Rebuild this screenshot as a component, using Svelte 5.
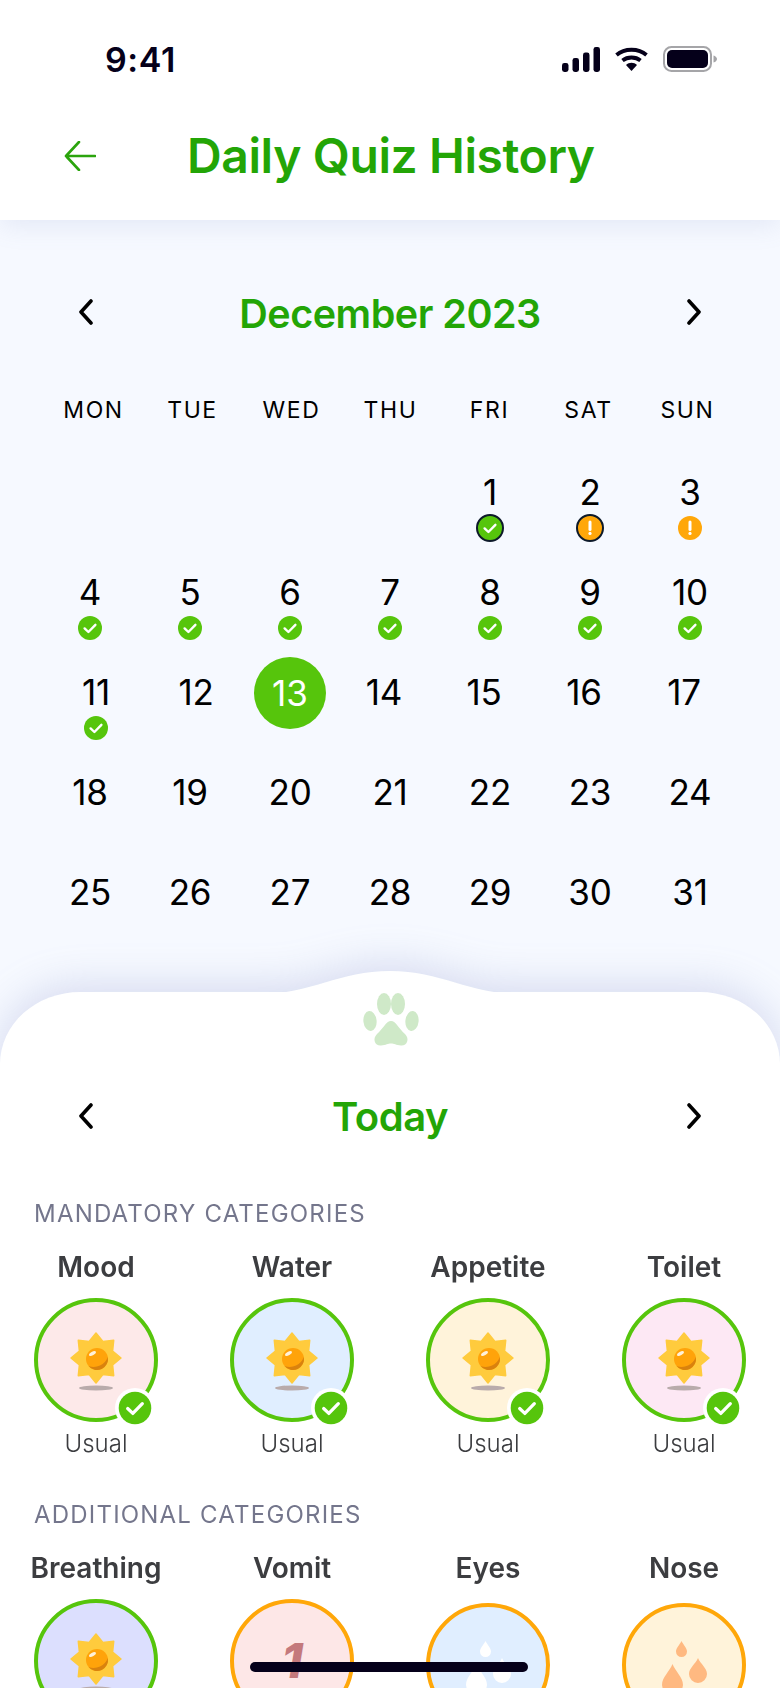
<script>
  const weekdays = ["MON", "TUE", "WED", "THU", "FRI", "SAT", "SUN"];

  // null = empty cell, mark: ok / okb (outlined) / warn / warnb
  const marks = { 1: "okb", 2: "warnb", 3: "warn", 4: "ok", 5: "ok", 6: "ok", 7: "ok", 8: "ok", 9: "ok", 10: "ok", 11: "ok" };
  const nudge = { 11: "right", 12: "right", 14: "left", 15: "left", 16: "left", 17: "left" };
  const days = [null, null, null, null];
  for (let d = 1; d <= 31; d++) days.push(d);

  const mandatory = [
    { name: "Mood", bg: "#fde9e9" },
    { name: "Water", bg: "#e0eeff" },
    { name: "Appetite", bg: "#fff3da" },
    { name: "Toilet", bg: "#fde8f4" }
  ];
</script>

{#snippet chevron(right)}
  <svg class="chevron" viewBox="0 0 16 26" width="16" height="26">
    <path d={right ? "M3 2 L13 13 L3 24" : "M13 2 L3 13 L13 24"} fill="none" stroke="#000" stroke-width="3.6" stroke-linecap="round" stroke-linejoin="round" />
  </svg>
{/snippet}

{#snippet mark(kind)}
  <svg class="mark" viewBox="0 0 28 28" width="28" height="28">
    {#if kind === "okb" || kind === "warnb"}
      <circle cx="14" cy="14" r="13" fill={kind === "okb" ? "#56c50c" : "#ffa709"} stroke="#0d1a2a" stroke-width="2" />
    {:else}
      <circle cx="14" cy="14" r="12" fill={kind === "ok" ? "#56c50c" : "#ffa709"} />
    {/if}
    {#if kind === "ok" || kind === "okb"}
      <path d="M8.6 14.4 L12.4 18 L19.4 10.8" fill="none" stroke="#fff" stroke-width="2.4" stroke-linecap="round" stroke-linejoin="round" />
    {:else}
      <path d="M14 8 V15.4" stroke="#fff" stroke-width="3" stroke-linecap="round" />
      <circle cx="14" cy="19.4" r="1.6" fill="#fff" />
    {/if}
  </svg>
{/snippet}

{#snippet sun()}
  <svg class="art" viewBox="0 0 60 70" width="60" height="70">
    <g transform="translate(0 3)">
      <path d="M30 5 L36.9 13.4 L47.7 12.3 L46.6 23.1 L55 30 L46.6 36.9 L47.7 47.7 L36.9 46.6 L30 55 L23.1 46.6 L12.3 47.7 L13.4 36.9 L5 30 L13.4 23.1 L12.3 12.3 L23.1 13.4 Z" fill="#ffcb3d" stroke="#ffcb3d" stroke-width="1.5" stroke-linejoin="round" />
      <circle cx="31" cy="31" r="11" fill="#ffa30a" />
      <path d="M41.8 29 A11 11 0 0 1 22.5 38 A15 15 0 0 0 41.8 29 Z" fill="#d9820e" />
      <ellipse cx="26.5" cy="25.5" rx="3.8" ry="1.8" fill="#fff" opacity="0.85" transform="rotate(-30 26.5 25.5)" />
    </g>
    <ellipse cx="30" cy="63" rx="17" ry="2.6" fill="#b9abab" />
  </svg>
{/snippet}

{#snippet tile(name, bg, state, label, art, low)}
  <div class="tile">
    <div class="tile-name">{name}</div>
    <div class="ring {state}" class:low style="background: {bg}">
      {@render art()}
      {#if state === "done"}
        <span class="ring-badge">{@render mark("ok")}</span>
      {/if}
    </div>
    {#if label}<div class="tile-label">{label}</div>{/if}
  </div>
{/snippet}

{#snippet vomitArt()}
  <span class="vomit">1</span>
{/snippet}

{#snippet drops(color)}
  <svg class="art drops" viewBox="0 0 70 70" width="70" height="70" fill={color}>
    <path d="M32.5 11 C34.5 15 38 18 38 21.5 A5.5 5.5 0 0 1 27 21.5 C27 18 30.5 15 32.5 11 Z" />
    <path d="M49 28 C51.5 34 58 38 58 44 A9 9 0 0 1 40 44 C40 38 46.5 34 49 28 Z" />
    <path d="M23.5 34 C26 41 34 47 34 55 A10.5 10.5 0 0 1 13 55 C13 47 21 41 23.5 34 Z" />
  </svg>
{/snippet}

{#snippet eyesArt()}
  {@render drops("#fff")}
{/snippet}

{#snippet noseArt()}
  {@render drops("#ffb981")}
{/snippet}

<div class="screen">
  <header class="top">
    <div class="status">
      <span class="time">9:41</span>
      <div class="status-icons">
        <svg viewBox="0 0 38 25" width="38" height="25">
          <rect x="0" y="16" width="6.5" height="9" rx="2.4" fill="#05001a" />
          <rect x="10.5" y="11" width="6.5" height="14" rx="2.4" fill="#05001a" />
          <rect x="21" y="5.5" width="6.5" height="19.5" rx="2.4" fill="#05001a" />
          <rect x="31.5" y="0" width="6.5" height="25" rx="2.4" fill="#05001a" />
        </svg>
        <svg viewBox="0 0 33 24" width="33" height="24">
          <path d="M1.5 8 C9.5 1 23.5 1 31.5 8 M7.5 13.5 C12.5 9.5 20.5 9.5 25.5 13.5" fill="none" stroke="#05001a" stroke-width="3.8" />
          <path d="M11 18 C14 15 19 15 22 18 L16.5 24 Z" fill="#05001a" />
        </svg>
        <svg viewBox="0 0 55 26" width="55" height="26">
          <rect x="1" y="1" width="47" height="24" rx="7.5" fill="none" stroke="#a5a5a8" stroke-width="2" />
          <rect x="4" y="4" width="41" height="18" rx="5" fill="#05001a" />
          <path d="M50.5 9.5 C52.5 10 54 11.5 54 13 C54 14.5 52.5 16 50.5 16.5 Z" fill="#a5a5a8" />
        </svg>
      </div>
    </div>
    <div class="title-row">
      <svg class="back" viewBox="0 0 32 30" width="32" height="30">
        <path d="M31 15 H2 M15 1 L2 15 L15 29" fill="none" stroke="#2ba40d" stroke-width="2.6" stroke-linecap="round" stroke-linejoin="round" />
      </svg>
      <h1>Daily Quiz History</h1>
    </div>
  </header>

  <section class="calendar">
    <div class="month-row">
      {@render chevron(false)}
      <h2>December 2023</h2>
      {@render chevron(true)}
    </div>
    <div class="weekdays">
      {#each weekdays as w}
        <div class="weekday">{w}</div>
      {/each}
    </div>
    <div class="grid days">
      {#each days as d}
        <div class="day {d ? nudge[d] || '' : ''}">
          {#if d === 13}
            <span class="today-dot">13</span>
          {:else if d}
            <span class="num">{d}</span>
            {#if marks[d]}
              {@render mark(marks[d])}
            {/if}
          {/if}
        </div>
      {/each}
    </div>
  </section>

  <section class="sheet">
    <svg class="bump" viewBox="0 0 260 24" width="260" height="24" preserveAspectRatio="none">
      <path d="M0 24 C50 24 80 1 130 1 C180 1 210 24 260 24 Z" fill="#fff" />
    </svg>
    <svg class="paw" viewBox="0 0 56 54" width="56" height="54">
      <g fill="#cfe9c8">
        <ellipse cx="21" cy="11" rx="7" ry="11" />
        <ellipse cx="35" cy="11" rx="7" ry="11" />
        <ellipse cx="7" cy="28" rx="6.6" ry="10" transform="rotate(-6 7 28)" />
        <ellipse cx="49" cy="28" rx="6.6" ry="10" transform="rotate(6 49 28)" />
        <path d="M28 28 C33 28 36 36 42 41 C47 46 44 53 38 52.5 C33 52 31 50.5 28 50.5 C25 50.5 23 52 18 52.5 C12 53 9 46 14 41 C20 36 23 28 28 28 Z" />
      </g>
    </svg>
    <div class="today-row">
      {@render chevron(false)}
      <h2>Today</h2>
      {@render chevron(true)}
    </div>

    <div class="section-label">MANDATORY CATEGORIES</div>
    <div class="tiles">
      {#each mandatory as c}
        {@render tile(c.name, c.bg, "done", "Usual", sun, false)}
      {/each}
    </div>

    <div class="section-label second">ADDITIONAL CATEGORIES</div>
    <div class="tiles">
      {@render tile("Breathing", "#dcdffe", "done", "", sun, false)}
      {@render tile("Vomit", "#fde7e7", "pending", "", vomitArt, false)}
      {@render tile("Eyes", "#e0eeff", "pending", "", eyesArt, true)}
      {@render tile("Nose", "#fff3da", "pending", "", noseArt, true)}
    </div>
  </section>

  <div class="home-bar"></div>
</div>

<style>
  :global(body) {
    margin: 0;
    background: #fff;
  }
  .screen {
    position: relative;
    width: 780px;
    height: 1688px;
    overflow: hidden;
    background: #f6f9ff;
    font-family: "Inter", "Noto Sans", sans-serif;
    color: #000;
  }

  /* Header */
  .top {
    height: 220px;
    background: #fff;
    box-shadow: 0 6px 24px rgba(120, 135, 190, 0.14);
    position: relative;
  }
  .status {
    display: flex;
    justify-content: space-between;
    align-items: center;
    padding: 40px 62px 0 105px;
    height: 38px;
  }
  .time {
    font-size: 34px;
    font-weight: 600;
    color: #05001a;
    letter-spacing: 0.6px;
  }
  .status-icons {
    display: flex;
    align-items: center;
    gap: 15px;
  }
  .title-row {
    display: flex;
    align-items: center;
    margin-top: 48px;
    padding-left: 64px;
  }
  .back {
    flex: none;
  }
  h1 {
    margin: 0 0 0 91px;
    font-size: 48px;
    font-weight: 600;
    color: #23a506;
    letter-spacing: -0.4px;
    line-height: 60px;
  }

  /* Calendar */
  .calendar {
    padding: 0 40px;
  }
  .month-row {
    display: flex;
    justify-content: space-between;
    align-items: center;
    padding: 72px 38px 0 38px;
    height: 40px;
  }
  .month-row h2 {
    padding-top: 3px;
  }
  h2 {
    margin: 0;
    font-size: 39.5px;
    font-weight: 600;
    color: #23a506;
    letter-spacing: -0.5px;
  }
  .grid {
    display: grid;
    grid-template-columns: repeat(7, 100px);
  }
  .weekdays {
    display: grid;
    grid-template-columns: repeat(7, 99px);
    padding-left: 4px;
  }
  .weekday {
    margin-top: 64px;
    text-align: center;
    font-size: 23px;
    font-weight: 400;
    letter-spacing: 1.6px;
    line-height: 28px;
  }
  .days {
    margin-top: 47px;
    grid-auto-rows: 100px;
  }
  .day {
    display: flex;
    flex-direction: column;
    align-items: center;
    box-sizing: border-box;
  }
  .day.right {
    padding-left: 12px;
  }
  .day.left {
    padding-right: 12px;
  }
  .num {
    font-size: 35px;
    line-height: 43px;
    letter-spacing: -0.2px;
  }
  .mark {
    display: block;
  }
  .today-dot {
    width: 72px;
    height: 72px;
    margin-top: -14px;
    border-radius: 50%;
    background: #56c50c;
    color: #fff;
    font-size: 35px;
    display: flex;
    align-items: center;
    justify-content: center;
  }

  /* Bottom sheet */
  .sheet {
    position: absolute;
    left: 0;
    right: 0;
    top: 992px;
    bottom: 0;
    background: #fff;
    border-radius: 80px 80px 0 0 / 72px 72px 0 0;
    filter: drop-shadow(0 -6px 20px rgba(110, 120, 190, 0.24));
    padding: 0 34px;
  }
  .bump {
    position: absolute;
    left: 260px;
    top: -22px;
  }
  .paw {
    display: block;
    margin: 1px auto 0;
    position: relative;
    left: 1px;
  }
  .today-row {
    display: flex;
    justify-content: space-between;
    align-items: center;
    margin-top: 44px;
    padding: 0 44px 0 44px;
    height: 50px;
  }
  .today-row h2 {
    font-size: 40px;
  }
  .section-label {
    margin-top: 59px;
    font-size: 24px;
    font-weight: 400;
    color: #74768c;
    letter-spacing: 1.2px;
    line-height: 28px;
  }
  .section-label.second {
    margin-top: 43px;
  }
  .tiles {
    display: grid;
    grid-template-columns: repeat(4, 124px);
    justify-content: space-between;
    margin-top: 22px;
  }
  .tile {
    display: flex;
    flex-direction: column;
    align-items: center;
  }
  .tile-name {
    font-size: 28px;
    font-weight: 600;
    color: #3c3d40;
    line-height: 34px;
    white-space: nowrap;
    height: 34px;
  }
  .ring {
    position: relative;
    box-sizing: border-box;
    width: 124px;
    height: 124px;
    margin-top: 14px;
    border-radius: 50%;
    border: 4px solid #56c50c;
    display: flex;
    align-items: center;
    justify-content: center;
  }
  .ring.pending {
    border-color: #ffa709;
  }
  .ring.low {
    margin-top: 18px;
  }
  .art {
    display: block;
  }
  .ring-badge {
    position: absolute;
    right: -1px;
    bottom: -10px;
    width: 40px;
    height: 40px;
    border-radius: 50%;
    background: #fff;
    display: flex;
    align-items: center;
    justify-content: center;
  }
  .ring-badge :global(svg) {
    width: 38px;
    height: 38px;
  }
  .vomit {
    font-size: 48px;
    font-weight: 800;
    font-style: italic;
    color: #c4797c;
    line-height: 1;
  }
  .tile-label {
    margin-top: 8px;
    font-size: 24px;
    font-weight: 300;
    color: #3c3d40;
    line-height: 28px;
  }
  .home-bar {
    position: absolute;
    left: 250px;
    top: 1662px;
    width: 278px;
    height: 10px;
    border-radius: 5px;
    background: #05001a;
  }
</style>
